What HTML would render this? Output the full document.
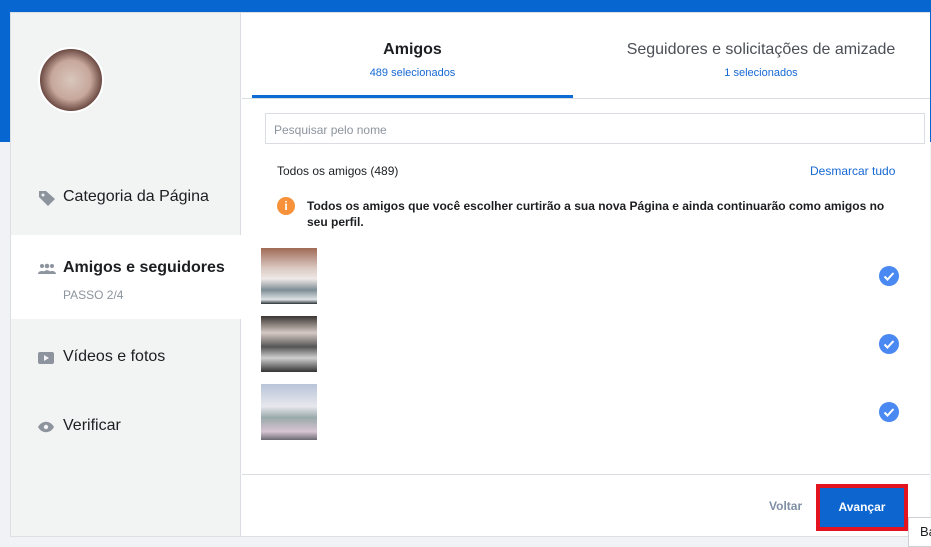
<!DOCTYPE html>
<html><head><meta charset="utf-8"><style>
*{margin:0;padding:0;box-sizing:border-box}
body{width:931px;height:541px;overflow:hidden;background:#f0f2f5;font-family:"Liberation Sans",Arial,sans-serif;position:relative}
.blue{position:absolute;left:0;top:0;width:931px;height:142px;background:#0866d0}
.dlg{position:absolute;left:10px;top:12px;width:920px;height:525px;background:#fff;border:1px solid #dcdfe3;border-right:none}
.left{position:absolute;left:0;top:0;width:230px;height:100%;background:#f2f3f3;border-right:1px solid #dadde1}
.av{position:absolute;left:27px;top:34px;width:66px;height:66px;border-radius:50%;border:2px solid #fff;background:radial-gradient(circle at 50% 50%,#d8c6bd 0,#c7a79b 45%,#5a3a33 75%,#2a1a18 100%)}
.item{position:absolute;left:0;width:230px;font-size:16px;color:#1c1e21}
.item .ic{position:absolute;left:27px;top:2px}
.item .t{position:absolute;left:52px;top:0}
.act{top:222px;height:84px;background:#fff}
.tab{position:absolute;top:28px;text-align:center}
.tab .a{font-size:16px;color:#1c1e21}
.tab .s{font-size:11px;color:#1668d3;margin-top:8px}
.ul{position:absolute;left:241px;top:82px;width:321px;height:3px;background:#0d6bd4}
.div{position:absolute;left:231px;top:85px;right:0;height:1px;background:#dadde1}
.search{position:absolute;left:254px;top:100px;width:660px;height:31px;border:1px solid #dadde1;font-size:12px;color:#8d949e;padding:9px 8px}
.thumb{position:absolute;left:250px;width:56px;height:56px}
.chk{position:absolute;left:868px;width:20px;height:20px;border-radius:50%;background:#4a89f2}
</style></head><body>
<div class="blue"></div>
<div class="dlg">
 <div class="left">
  <div class="av"></div>
  <div class="item" style="top:175px"><svg class="ic" width="18" height="16" viewBox="0 0 18 16"><path d="M1 1h7l9 8-7 7-9-9z" fill="#8d949e"/><circle cx="5" cy="5" r="1.5" fill="#f2f3f3"/></svg><span class="t">Categoria da Página</span></div>
  <div class="item act"><div style="position:absolute;top:24px;left:0;width:230px"><svg class="ic" width="18" height="12" viewBox="0 0 18 12" style="top:4px"><circle cx="4" cy="3" r="2" fill="#8d949e"/><circle cx="9" cy="3" r="2.3" fill="#8d949e"/><circle cx="14" cy="3" r="2" fill="#8d949e"/><path d="M0 11c0-4 8-4 8 0zM5 11c0-5 8-5 8 0zM10 11c0-4 8-4 8 0z" fill="#8d949e"/></svg><span class="t" style="font-weight:bold">Amigos e seguidores</span><div style="position:absolute;left:52px;top:29px;font-size:12px;color:#8d949e">PASSO 2/4</div></div></div>
  <div class="item" style="top:335px"><svg class="ic" width="16" height="14" viewBox="0 0 16 14" style="top:3px"><rect x="0" y="1" width="16" height="12" rx="2" fill="#8d949e"/><path d="M6 4l5 3-5 3z" fill="#f2f3f3"/></svg><span class="t">Vídeos e fotos</span></div>
  <div class="item" style="top:404px"><svg class="ic" width="16" height="12" viewBox="0 0 16 12" style="top:4px"><path d="M0 6c4-7 12-7 16 0-4 7-12 7-16 0z" fill="#8d949e"/><circle cx="8" cy="6" r="2.2" fill="#f2f3f3"/></svg><span class="t">Verificar</span></div>
 </div>
 <div class="tab" style="left:241px;width:321px"><div class="a" style="font-weight:bold">Amigos</div><div class="s">489 selecionados</div></div>
 <div class="tab" style="left:600px;width:300px"><div class="a" style="color:#4b4f56">Seguidores e solicitações de amizade</div><div class="s">1 selecionados</div></div>
 <div class="div"></div><div class="ul"></div>
 <div class="search">Pesquisar pelo nome</div>
 <div style="position:absolute;left:266px;top:151px;font-size:12px;color:#1c1e21">Todos os amigos (489)</div>
 <div style="position:absolute;left:799px;top:151px;font-size:12px;color:#1668d3">Desmarcar tudo</div>
 <div style="position:absolute;left:266px;top:184px;width:18px;height:18px;border-radius:50%;background:#f7923a;color:#fff;font-size:12px;font-weight:bold;text-align:center;line-height:18px">i</div>
 <div style="position:absolute;left:296px;top:185px;width:590px;font-size:12px;line-height:16px;color:#1c1e21;font-weight:bold">Todos os amigos que você escolher curtirão a sua nova Página e ainda continuarão como amigos no seu perfil.</div>
 <div class="thumb" style="top:235px;background:linear-gradient(#a06a55,#d9c7c0 35%,#efe9e7 55%,#7e8d95 75%,#dfe3e6 92%,#2c3338)"></div>
 <div class="thumb" style="top:303px;background:linear-gradient(#3a3533,#d5c9c4 30%,#555 55%,#cfcfcf 75%,#333)"></div>
 <div class="thumb" style="top:371px;background:linear-gradient(#b8c4d8,#e8e8ee 40%,#9aa 60%,#d8c4d4 85%,#6a6a72)"></div>
 <div class="chk" style="top:253px"><svg width="20" height="20"><path d="M5.5 10.5l3 3 6-6.5" stroke="#fff" stroke-width="2" fill="none"/></svg></div>
 <div class="chk" style="top:321px"><svg width="20" height="20"><path d="M5.5 10.5l3 3 6-6.5" stroke="#fff" stroke-width="2" fill="none"/></svg></div>
 <div class="chk" style="top:389px"><svg width="20" height="20"><path d="M5.5 10.5l3 3 6-6.5" stroke="#fff" stroke-width="2" fill="none"/></svg></div>
 <div style="position:absolute;left:231px;top:461px;right:0;height:1px;background:#dadde1"></div>
 <div style="position:absolute;left:758px;top:486px;font-size:12px;font-weight:bold;color:#7f8fa4">Voltar</div>
 <div style="position:absolute;left:805px;top:471px;width:92px;height:47px;border:4px solid #e3141f;background:#0d66d0;color:#fff;font-size:12px;font-weight:bold;text-align:center;line-height:39px">Avançar</div>
</div>
<div style="position:absolute;left:908px;top:517px;width:30px;height:30px;background:#fff;border:1px solid #ccd0d5;font-size:13px;padding:6px 0 0 11px;color:#1c1e21">Ba</div>
</body></html>
